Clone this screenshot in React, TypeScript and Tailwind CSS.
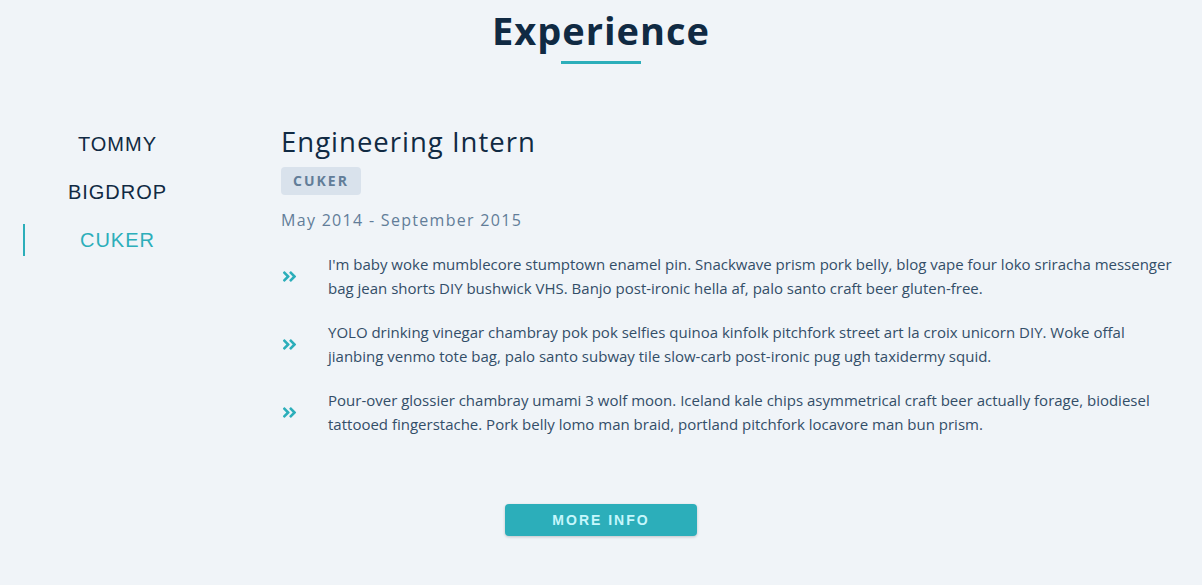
import { FaAngleDoubleRight } from 'react-icons/fa';

const jobs = ['TOMMY', 'BIGDROP', 'CUKER'];

const duties = [
  "I'm baby woke mumblecore stumptown enamel pin. Snackwave prism pork belly, blog vape four loko sriracha messenger bag jean shorts DIY bushwick VHS. Banjo post-ironic hella af, palo santo craft beer gluten-free.",
  'YOLO drinking vinegar chambray pok pok selfies quinoa kinfolk pitchfork street art la croix unicorn DIY. Woke offal jianbing venmo tote bag, palo santo subway tile slow-carb post-ironic pug ugh taxidermy squid.',
  'Pour-over glossier chambray umami 3 wolf moon. Iceland kale chips asymmetrical craft beer actually forage, biodiesel tattooed fingerstache. Pork belly lomo man braid, portland pitchfork locavore man bun prism.',
];

export default function App() {
  const active = 2;

  return (
    <div className="min-h-[585px] bg-[#f0f4f8] font-['Segoe_UI','Open_Sans',sans-serif]">
      <div className="flex flex-col items-center pt-[5px]">
        <h2 className="text-[38px] font-bold leading-[50px] tracking-[1px] text-[#102a43]">Experience</h2>
        <div className="mt-[6px] h-[3px] w-[80px] bg-[#2caeba]" />
      </div>

      <div className="mt-[62px] flex pl-[23px] pr-[20px]">
        <div className="flex w-[187px] shrink-0 flex-col gap-[16px] pt-[2px]">
          {jobs.map((job, i) => (
            <button
              key={job}
              className={`h-[32px] font-['Liberation_Sans',Arial,sans-serif] text-[20px] tracking-[1px] ${
                i === active ? 'border-l-2 border-[#2caeba] text-[#2caeba]' : 'border-l-2 border-transparent text-[#102a43]'
              }`}
            >
              {job}
            </button>
          ))}
        </div>

        <article className="ml-[71px] flex-1">
          <h3 className="text-[27.5px] leading-[32px] tracking-[1px] text-[#102a43]">Engineering Intern</h3>
          <div className="mt-[9px] inline-block rounded-[4px] bg-[#d9e2ec] px-[12px] py-[3px] text-[14px] font-bold leading-[22px] tracking-[2px] text-[#627d98]">
            CUKER
          </div>
          <p className="mt-[13px] text-[16px] tracking-[1.3px] text-[#627d98]">May 2014 - September 2015</p>

          <div className="mt-[20px] flex flex-col gap-[20px]">
            {duties.map((d) => (
              <div key={d} className="flex items-center">
                <span className="w-[47px] shrink-0">
                  <FaAngleDoubleRight className="text-[17px] text-[#2caeba]" />
                </span>
                <p className="text-[15px] leading-[24px] text-[#334e68]">{d}</p>
              </div>
            ))}
          </div>
        </article>
      </div>

      <div className="mt-[68px] flex justify-center">
        <button className="h-[32px] w-[192px] rounded-[4px] bg-[#2caeba] font-['Liberation_Sans',Arial,sans-serif] text-[14px] font-bold tracking-[2px] text-[#c6f7fc] shadow-[0_1px_3px_rgba(0,0,0,0.2)]">
          MORE INFO
        </button>
      </div>
    </div>
  );
}
